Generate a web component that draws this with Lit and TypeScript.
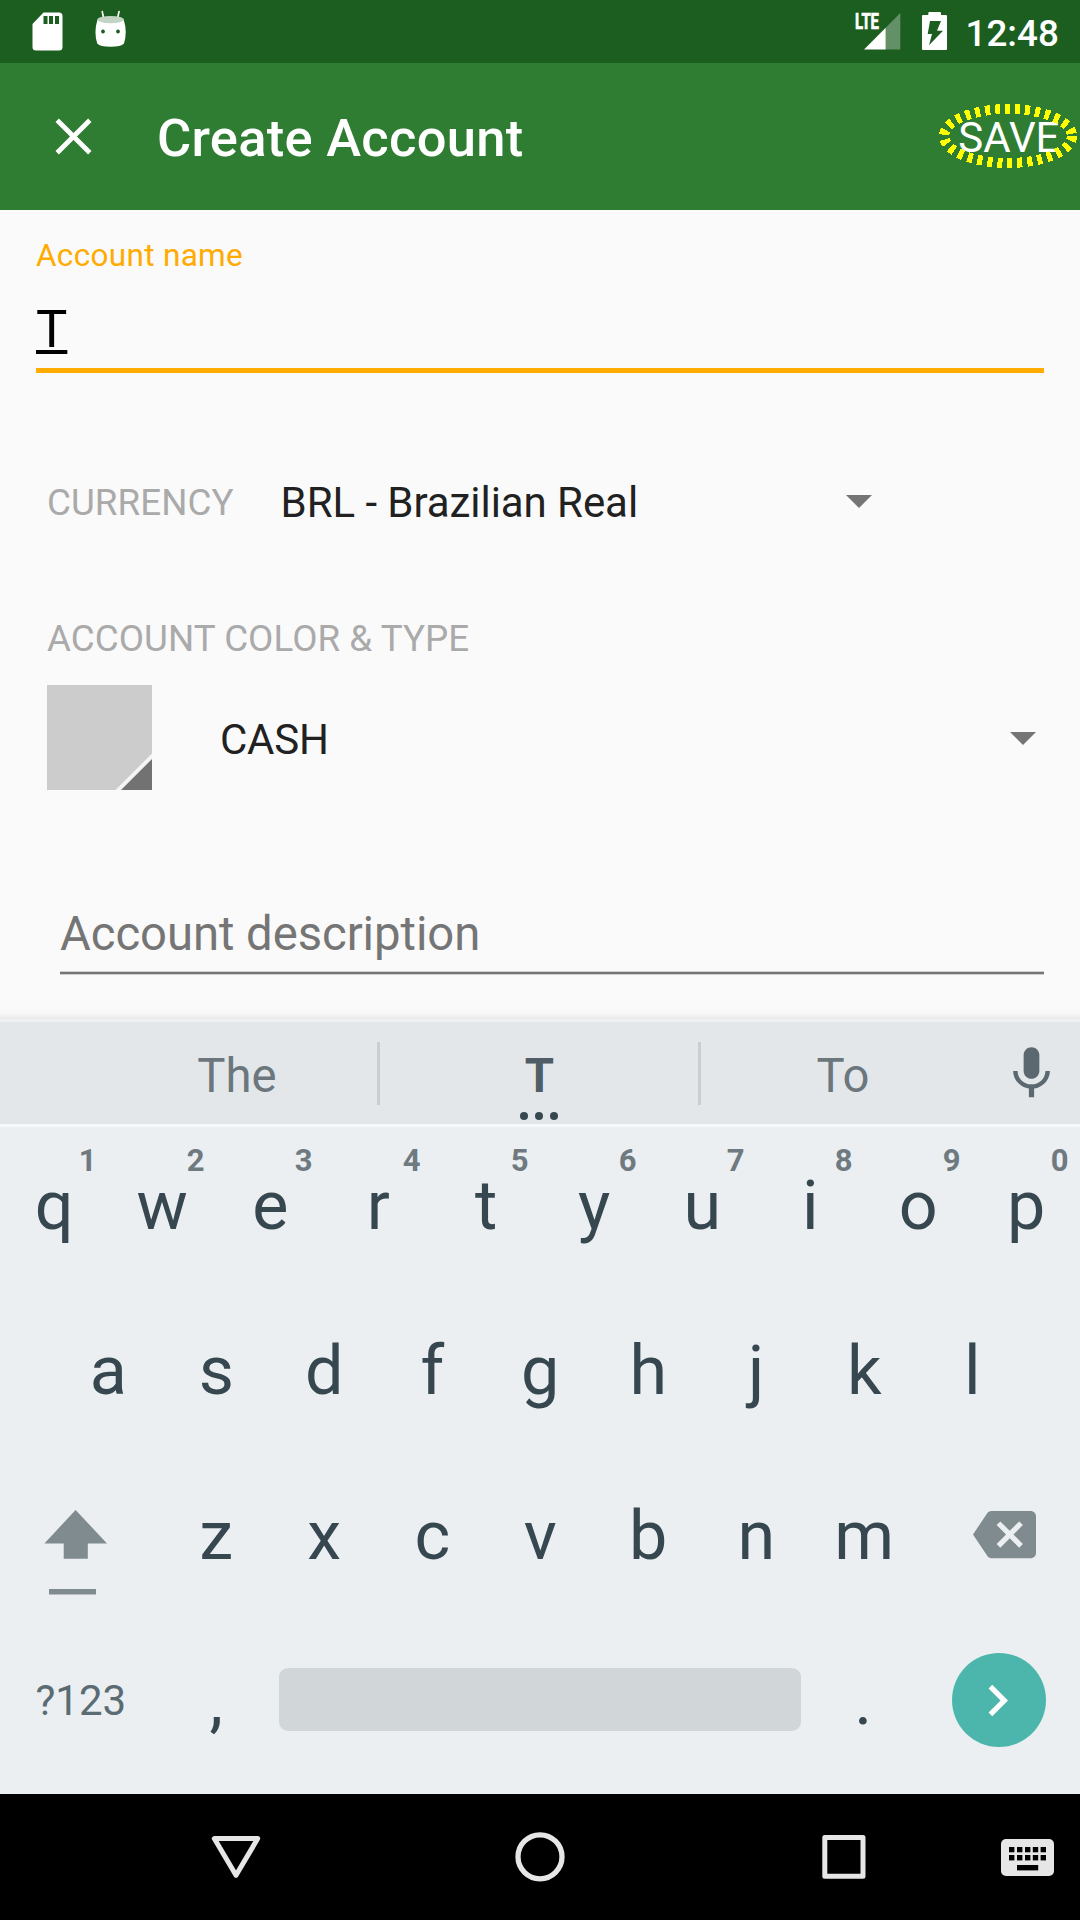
import { LitElement, html, css, svg } from "lit";
import { customElement, property } from "lit/decorators.js";

@customElement("status-bar")
class StatusBar extends LitElement {
  static styles = css`
    :host { display: block; height: 63px; background: #1b5e20; }
    .icons { display: block; width: 1080px; height: 63px; }
    .lte { font: 700 21.5px Roboto, sans-serif; fill: #fff; stroke: #fff; stroke-width: 0.7px; }
    .clock { font: 500 36.75px Roboto, sans-serif; fill: #fff; }
  `;
  render() {
    return html`<svg class="icons" viewBox="0 0 1080 63">
      <path fill="#fff" fill-rule="evenodd" d="M43.5 12.5H59Q62.5 12.5 62.5 16V47Q62.5 50.5 59 50.5H36Q32.5 50.5 32.5 47V24ZM43.5 16V24H47.5V16ZM49 16V24H53V16ZM55 16V24H59V16Z"/>
      <path stroke="#fff" stroke-width="1.7" stroke-linecap="round" d="M102.3 11.6L103.5 18M119 11.6L117.7 18"/>
      <path fill="#fff" fill-rule="evenodd" d="M97.5 19.5Q110.5 26 123.7 19.5Q127.6 32 124 43.5Q121 46.8 110.6 46.8Q100 46.8 97.2 43.5Q93.6 32 97.5 19.5ZM103 29.6a1.9 1.9 0 1 0 .01 0ZM118 29.6a1.9 1.9 0 1 0 .01 0Z"/>
      <ellipse cx="110.6" cy="19.6" rx="13.2" ry="3.6" fill="#c2d4c4"/>
      <text class="lte" x="855" y="29.3" textLength="24" lengthAdjust="spacingAndGlyphs">LTE</text>
      <path fill="#639067" d="M885.7 27.8L900.3 13V49.5H885.7Z"/>
      <path fill="#fff" d="M864 49.5L885.7 27.8V49.5Z"/>
      <path fill="#fff" fill-rule="evenodd" d="M928.3 15V13.2Q928.3 12 929.5 12H939.8Q941 12 941 13.2V15H946Q947 15 947 16V49Q947 50 946 50H923Q922 50 922 49V16Q922 15 923 15ZM930 21L927.7 34H932L929 45.3L943 30.7H937L941 21Z"/>
      <text class="clock" x="965.6" y="46">12:48</text>
    </svg>`;
  }
}

@customElement("app-toolbar")
class AppToolbar extends LitElement {
  static styles = css`
    :host { display: flex; align-items: center; height: 147px; box-sizing: border-box; padding: 0 20.5px 0 42.4px; background: #2e7d32; color: #fff; }
    .close { width: 63px; height: 63px; }
    .title { flex: 1; margin: 3px 0 0 51.5px; font: 500 52.5px/60px Roboto, sans-serif; letter-spacing: 0.27px; }
    .save { position: relative; font: 400 42px/50px Roboto, sans-serif; margin-top: 2px; }
    .mark { position: absolute; left: -20.5px; top: -9.5px; width: 140px; height: 66px; }
  `;
  render() {
    return html`
      <svg class="close" viewBox="0 0 63 63"><path stroke="#fff" stroke-width="4.8" d="M15.2 15.2L47.8 47.8M47.8 15.2L15.2 47.8"/></svg>
      <div class="title">Create Account</div>
      <div class="save">SAVE
        <svg class="mark" viewBox="0 0 140 66"><ellipse cx="70" cy="33" rx="64" ry="27" fill="none" stroke="#ff0" stroke-width="10" stroke-dasharray="5 5" shape-rendering="crispEdges"/></svg>
      </div>`;
  }
}

@customElement("account-form")
class AccountForm extends LitElement {
  static styles = css`
    :host { display: flex; flex-direction: column; height: 809px; box-sizing: border-box; padding: 26px 36px 0; color: #212121; font-family: Roboto, sans-serif;
      background: linear-gradient(#fafafa, #f7f7f7 50%, #e9e9e9) bottom / 100% 11px no-repeat #fafafa; }
    .hint { font-size: 31.5px; line-height: 40px; letter-spacing: 0.32px; color: #ffab00; }
    .name { margin-top: 23px; height: 69px; border-bottom: 5px solid #ffab00; font-size: 52.5px; line-height: 60px; color: #000; }
    .typed { text-decoration: underline; text-decoration-thickness: 3.5px; text-underline-offset: 3px; text-decoration-skip-ink: none; }
    .row { display: flex; align-items: center; }
    .currency { height: 49px; margin-top: 105px; padding: 0 172.5px 0 11px; }
    .caption { font-size: 36.75px; line-height: 49px; letter-spacing: 0.05px; color: #aaa; }
    .value { flex: 1; font-size: 42px; line-height: 50px; letter-spacing: -0.06px; }
    .currency .value { margin-left: 47px; }
    .arrow { width: 26px; height: 13px; fill: #757575; }
    .currency .arrow { margin-bottom: 2px; }
    .section { margin: 87px 0 0 11px; }
    .type { margin-top: 22px; height: 105px; padding: 0 8.5px 0 11px; }
    .swatch { width: 105px; height: 105px; }
    .type .value { margin: 4px 0 0 68px; letter-spacing: -0.25px; }
    .type .arrow { margin-top: 2px; }
    .description { margin: 114px 0 0 24px; height: 71px; font-size: 47.25px; line-height: 61px; letter-spacing: -0.06px; color: #757575;
      background: linear-gradient(#cfcfcf 1px, #757575 1px, #757575 3px, #cfcfcf 3px) bottom / 100% 4px no-repeat; }
  `;
  arrow() {
    return html`<svg class="arrow" viewBox="0 0 26 13"><path d="M0 0H26L13 13Z"/></svg>`;
  }
  render() {
    return html`
      <div class="hint">Account name</div>
      <div class="name"><span class="typed">T</span></div>
      <div class="row currency">
        <div class="caption">CURRENCY</div>
        <div class="value">BRL - Brazilian Real</div>
        ${this.arrow()}
      </div>
      <div class="caption section">ACCOUNT COLOR &amp; TYPE</div>
      <div class="row type">
        <svg class="swatch" viewBox="0 0 105 105">
          <path fill="#ccc" d="M0 0H105V105H0Z"/>
          <path fill="#f5f5f5" d="M105 68.5V105H68.5Z"/>
          <path fill="#727272" d="M105 74V105H74Z"/>
        </svg>
        <div class="value">CASH</div>
        ${this.arrow()}
      </div>
      <div class="description">Account description</div>`;
  }
}

@customElement("letter-key")
class LetterKey extends LitElement {
  @property() label = "";
  @property() hint = "";
  static styles = css`
    :host { display: block; position: relative; box-sizing: border-box; width: 108px; padding: 2px 0 0 0.5px; text-align: center; font: 400 68.25px/157px Roboto, sans-serif; color: #37474f; }
    .hint { position: absolute; left: 72.7px; top: 16px; width: 30px; font: 700 31px/38px Roboto, sans-serif; color: #6f7a80; }
  `;
  render() {
    return html`${this.label}${this.hint ? html`<span class="hint">${this.hint}</span>` : ""}`;
  }
}

@customElement("soft-keyboard")
class SoftKeyboard extends LitElement {
  static styles = css`
    :host { display: block; height: 775px; background: #ebeff2; font-family: Roboto, sans-serif; }
    .strip { display: grid; grid-template-columns: 281px 3px 318px 3px 283px 96px; height: 102px; padding-left: 96px; width: 984px;
      background: #e3e7ea; border-top: 3px solid #eef0f1; border-bottom: 3px solid #f6f8f9; align-items: center; }
    .word { position: relative; text-align: center; font-size: 47.25px; line-height: 60px; padding: 5px 0 0 1px; color: #6c777d; }
    .best { font-weight: 700; color: #4f5e66; }
    .more { position: absolute; left: 139px; top: 70px; width: 40px; height: 10px; fill: #37474f; }
    .divider { height: 63px; background: #c9ced1; }
    .mic { width: 63px; height: 63px; margin: 1px 0 0 16.2px; fill: #5b6870; }
    .keys { display: flex; align-items: center; height: 157px; padding-bottom: 8px; }
    .middle { justify-content: center; }
    .shift { width: 162px; height: 157px; fill: #808b8f; }
    .delete { width: 63px; height: 63px; margin: 0 0 1.5px 54.8px; fill: #808b8f; }
    .symbols { width: 126.5px; padding-left: 35.5px; font-size: 42px; line-height: 50px; color: #5b6b72; }
    .space { width: 522px; height: 63px; margin: 0 8px 2px 9px; border-radius: 9px; background: #d1d6d9; }
    .enter { display: flex; align-items: center; justify-content: center; width: 94.5px; height: 94.5px; margin: 0 0 1px 34.8px; border-radius: 50%; background: #4db6ac; }
    .chevron { width: 63px; height: 63px; margin-right: 3px; fill: #fff; }
  `;
  keys(letters: string, hints = "") {
    return [...letters].map((l, i) => html`<letter-key label=${l} hint=${hints[i] ?? ""}></letter-key>`);
  }
  render() {
    return html`
      <div class="strip">
        <div class="word">The</div><div class="divider"></div>
        <div class="word best">T<svg class="more" viewBox="0 0 40 10"><circle cx="5" cy="5" r="4"/><circle cx="20" cy="5" r="4"/><circle cx="35" cy="5" r="4"/></svg></div>
        <div class="divider"></div><div class="word">To</div>
        <svg class="mic" viewBox="0 0 24 24"><path d="M12 14c1.66 0 2.99-1.34 2.99-3L15 5c0-1.66-1.34-3-3-3S9 3.34 9 5v6c0 1.66 1.34 3 3 3zm5.3-3c0 3-2.54 5.1-5.3 5.1S6.7 14 6.7 11H5c0 3.41 2.72 6.23 6 6.72V21h2v-3.28c3.28-.48 6-3.3 6-6.72h-1.7z"/></svg>
      </div>
      <div class="keys">${this.keys("qwertyuiop", "1234567890")}</div>
      <div class="keys middle">${this.keys("asdfghjkl")}</div>
      <div class="keys">
        <svg class="shift" viewBox="0 0 162 157"><path d="M75.6 53L107 86.4H87.8V101.7H63.7V86.4H44.4ZM49 132H96V137.5H49Z"/></svg>
        ${this.keys("zxcvbnm")}
        <svg class="delete" viewBox="0 0 24 24"><path d="M22 3H7c-.69 0-1.23.35-1.59.88L0 12l5.41 8.11c.36.53.9.89 1.59.89h15c1.1 0 2-.9 2-2V5c0-1.1-.9-2-2-2zm-3 12.59L17.59 17 14 13.41 10.41 17 9 15.59 12.59 12 9 8.41 10.41 7 14 10.59 17.59 7 19 8.41 15.41 12 19 15.59z"/></svg>
      </div>
      <div class="keys">
        <div class="symbols">?123</div>
        ${this.keys(",")}
        <div class="space"></div>
        ${this.keys(".")}
        <div class="enter"><svg class="chevron" viewBox="0 0 24 24"><path d="M10 6L8.59 7.41 13.17 12l-4.58 4.59L10 18l6-6z"/></svg></div>
      </div>`;
  }
}

@customElement("nav-bar")
class NavBar extends LitElement {
  static styles = css`
    :host { display: block; height: 126px; background: #000; }
    .icons { display: block; width: 1080px; height: 126px; }
  `;
  render() {
    const holes = [1009, 1017, 1025, 1032.8, 1040.6];
    return html`<svg class="icons" viewBox="0 1794 1080 126">
      <g fill="none" stroke="#e6e6e6" stroke-width="5" stroke-linejoin="round">
        <path d="M214.3 1838.6H257.7L236 1875.3Z"/>
        <circle cx="540" cy="1856.8" r="22" stroke-width="5.3"/>
        <rect x="824.8" y="1837.6" width="38.2" height="38.6"/>
      </g>
      <rect x="1001" y="1839" width="53" height="37" rx="5" fill="#e6e6e6"/>
      ${holes.map((x) => svg`<rect x=${x} y="1847" width="5.4" height="5.3"/><rect x=${x} y="1855" width="5.4" height="5.4"/>`)}
      <rect x="1017" y="1865" width="21.2" height="5.4"/>
    </svg>`;
  }
}

@customElement("app-root")
class AppRoot extends LitElement {
  static styles = css`
    :host { display: flex; flex-direction: column; width: 1080px; height: 1920px; overflow: hidden; }
  `;
  render() {
    return html`
      <status-bar></status-bar>
      <app-toolbar></app-toolbar>
      <account-form></account-form>
      <soft-keyboard></soft-keyboard>
      <nav-bar></nav-bar>`;
  }
}
